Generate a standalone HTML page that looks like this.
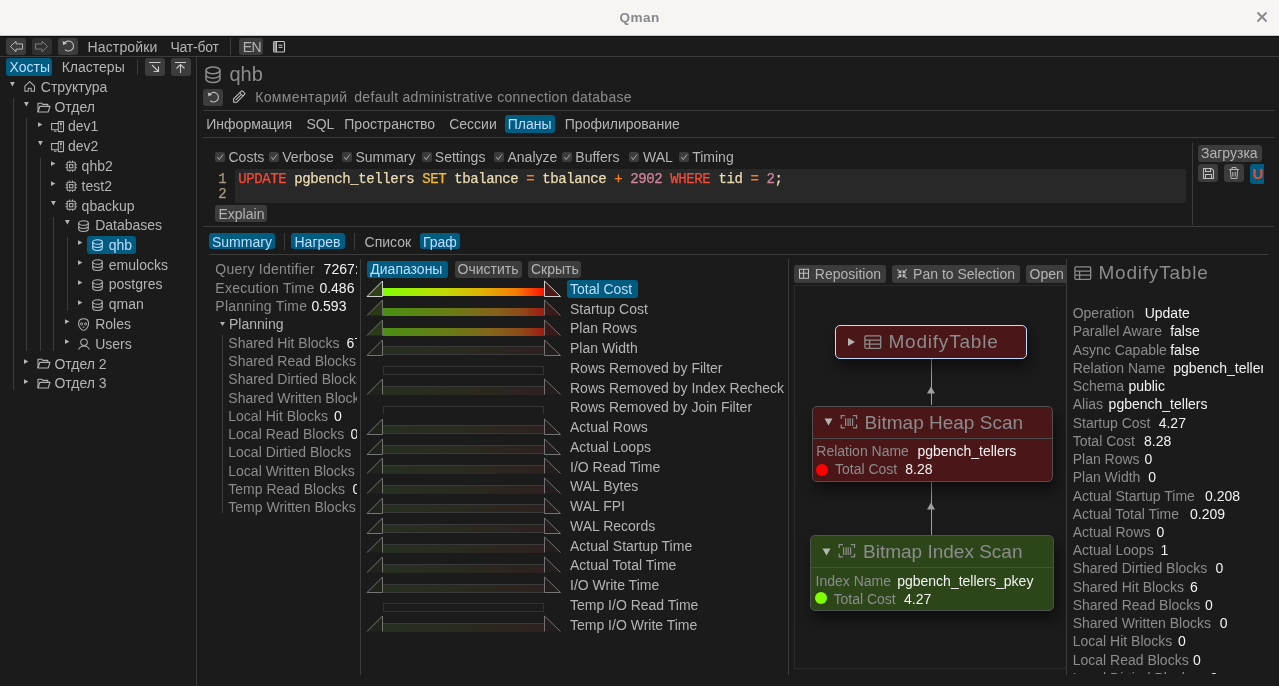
<!DOCTYPE html><html><head><meta charset="utf-8"><style>
html,body{margin:0;padding:0;}
body{width:1279px;height:686px;overflow:hidden;background:#1b1b1b;position:relative;font-family:"Liberation Sans",sans-serif;}
.t{position:absolute;white-space:nowrap;font-size:14px;line-height:16px;}
.r{position:absolute;}
.m{font-family:"Liberation Mono",monospace;-webkit-text-stroke:0.25px currentColor;}
svg{overflow:visible}
</style></head><body><div id="root" style="position:absolute;left:0;top:0;width:1279px;height:686px;overflow:hidden;will-change:transform;background:#1b1b1b">
<div class="r" style="left:0.0px;top:0.0px;width:1279.0px;height:35.0px;background:#f6f5f4;border-radius:0px;"></div>
<div class="r" style="left:0.0px;top:35.0px;width:1279.0px;height:1.0px;background:#c9c5c1;border-radius:0px;"></div>
<div class="r" style="left:0.0px;top:36.0px;width:1279.0px;height:1.0px;background:#0f0f0f;border-radius:0px;"></div>
<div class="t" style="left:619.5px;top:10.32px;color:#86898c;font-size:13.5px;line-height:16px;font-weight:bold;letter-spacing:0.5px;">Qman</div>
<svg class="r" style="left:1257px;top:12px;" width="10" height="10" viewBox="0 0 10 10"><path d="M1 1L9 9M9 1L1 9" stroke="#85898c" stroke-width="1.8" stroke-linecap="round"/></svg>
<div class="r" style="left:6.0px;top:38.0px;width:20.0px;height:17.0px;background:#3c3c3c;border-radius:3px;"></div>
<div class="r" style="left:32.0px;top:38.0px;width:20.0px;height:17.0px;background:#303030;border-radius:3px;"></div>
<div class="r" style="left:58.0px;top:38.0px;width:20.0px;height:17.0px;background:#3c3c3c;border-radius:3px;"></div>
<svg class="r" style="left:6px;top:38px;" width="20" height="17" viewBox="0 0 20 17"><path d="M4.5 8.5L10 3.2V5.9H16.5V11.1H10V13.8Z" fill="none" stroke="#b4b4b4" stroke-width="1" stroke-linejoin="miter"/></svg>
<svg class="r" style="left:32px;top:38px;" width="20" height="17" viewBox="0 0 20 17"><path d="M15.5 8.5L10 3.2V5.9H3.5V11.1H10V13.8Z" fill="none" stroke="#7a7a7a" stroke-width="1"/></svg>
<svg class="r" style="left:58px;top:38px;" width="20" height="17" viewBox="0 0 20 17"><path d="M6.4 5.2A5 5 0 1 1 7 11.6" fill="none" stroke="#c0c0c0" stroke-width="1.1"/><path d="M4.6 3.1L9.1 5L5.2 7.3Z" fill="#c0c0c0"/></svg>
<div class="t" style="left:87.5px;top:39.00px;color:#b4b4b4;font-size:14px;line-height:16px;letter-spacing:0.15px;">Настройки</div>
<div class="t" style="left:170.4px;top:39.00px;color:#b4b4b4;font-size:14px;line-height:16px;letter-spacing:-0.2px;">Чат-бот</div>
<div class="r" style="left:230.0px;top:38.0px;width:1.0px;height:17.0px;background:#3c3c3c;border-radius:0px;"></div>
<div class="r" style="left:239.0px;top:38.0px;width:23.5px;height:17.0px;background:#3c3c3c;border-radius:3px;"></div>
<div class="t" style="left:242.8px;top:39.00px;color:#b4b4b4;font-size:14px;line-height:16px;letter-spacing:-0.6px;">EN</div>
<svg class="r" style="left:272px;top:40px;" width="14" height="14" viewBox="0 0 14 14"><rect x="1.5" y="1.5" width="11" height="10.5" rx="1" fill="none" stroke="#c8c8c8" stroke-width="1.1"/><rect x="1.5" y="1.5" width="3" height="10.5" fill="#8a8a8a"/><path d="M4.5 1.5V12M6.5 5.2H10.5M6.5 7.4H10.5" stroke="#c8c8c8" stroke-width="1"/></svg>
<div class="r" style="left:0.0px;top:56.0px;width:1279.0px;height:1.0px;background:#3c3c3c;border-radius:0px;"></div>
<div class="r" style="left:6.0px;top:58.0px;width:46.0px;height:18.0px;background:#005c80;border-radius:3px;"></div>
<div class="t" style="left:9.6px;top:59.00px;color:#c0deff;font-size:14px;line-height:16px;">Хосты</div>
<div class="t" style="left:61.7px;top:59.00px;color:#b4b4b4;font-size:14px;line-height:16px;">Кластеры</div>
<div class="r" style="left:136.5px;top:59.0px;width:1.0px;height:16.0px;background:#3c3c3c;border-radius:0px;"></div>
<div class="r" style="left:145.0px;top:58.0px;width:20.0px;height:18.0px;background:#3c3c3c;border-radius:3px;"></div>
<div class="r" style="left:171.0px;top:58.0px;width:20.0px;height:18.0px;background:#3c3c3c;border-radius:3px;"></div>
<svg class="r" style="left:145px;top:58px;" width="20" height="18" viewBox="0 0 20 18"><path d="M4 4.5H15.5M7 7L13.5 13.5M13.5 8.5V13.5H8.5" fill="none" stroke="#c8c8c8" stroke-width="1.1"/></svg>
<svg class="r" style="left:171px;top:58px;" width="20" height="18" viewBox="0 0 20 18"><path d="M4 4.5H15M9.5 6.5V15M5.5 10.5L9.5 6.5L13.5 10.5" fill="none" stroke="#c8c8c8" stroke-width="1.1"/></svg>
<div class="r" style="left:196.0px;top:57.0px;width:1.0px;height:629.0px;background:#3c3c3c;border-radius:0px;"></div>
<div class="r" style="left:13.0px;top:98.0px;width:1.0px;height:292.0px;background:#3c3c3c;border-radius:0px;"></div>
<div class="r" style="left:26.0px;top:117.5px;width:1.0px;height:233.5px;background:#3c3c3c;border-radius:0px;"></div>
<div class="r" style="left:39.5px;top:157.5px;width:1.0px;height:193.5px;background:#3c3c3c;border-radius:0px;"></div>
<div class="r" style="left:53.0px;top:216.5px;width:1.0px;height:134.5px;background:#3c3c3c;border-radius:0px;"></div>
<div class="r" style="left:67.0px;top:236.5px;width:1.0px;height:74.5px;background:#3c3c3c;border-radius:0px;"></div>
<div class="r" style="left:87.0px;top:236.0px;width:49.0px;height:18.0px;background:#005c80;border-radius:3px;"></div>
<svg class="r" style="left:10.4px;top:82.0px;" width="6" height="6" viewBox="0 0 6 6"><path d="M0 0H4.8L2.4 4.4Z" fill="#b4b4b4"/></svg>
<svg class="r" style="left:24px;top:80.8px;" width="12" height="12" viewBox="0 0 12 12"><path d="M0.9 10.2V5.1L5.7 0.7L10.5 5.1V10.2H7.1V7.3H4.3V10.2Z" fill="none" stroke="#b4b4b4" stroke-width="1.05" stroke-linejoin="round"/></svg>
<div class="t" style="left:40.8px;top:79.00px;color:#b4b4b4;font-size:14px;line-height:16px;">Структура</div>
<svg class="r" style="left:23.95px;top:101.75px;" width="6" height="6" viewBox="0 0 6 6"><path d="M0 0H4.8L2.4 4.4Z" fill="#b4b4b4"/></svg>
<svg class="r" style="left:37.2px;top:101.65px;" width="14" height="11" viewBox="0 0 14 11"><path d="M1 10V1.2H4.6L5.8 2.4H10.8V4.2" fill="none" stroke="#b4b4b4" stroke-width="1.1" stroke-linejoin="round"/><path d="M1 10L2.8 4.4H13L11.2 10Z" fill="none" stroke="#b4b4b4" stroke-width="1.1" stroke-linejoin="round"/></svg>
<div class="t" style="left:54.4px;top:99.00px;color:#b4b4b4;font-size:14px;line-height:16px;">Отдел</div>
<svg class="r" style="left:37.5px;top:121.9px;" width="6" height="6" viewBox="0 0 6 6"><path d="M0 0.2L4.4 2.6L0 5Z" fill="#b4b4b4"/></svg>
<svg class="r" style="left:51.2px;top:121.0px;" width="14" height="12" viewBox="0 0 14 12"><path d="M7.3 2.5H0.6V8.7H7.3M3 10.2H5.5" fill="none" stroke="#b4b4b4" stroke-width="1.05"/><rect x="7.3" y="0.6" width="5.2" height="10" rx="0.6" fill="none" stroke="#b4b4b4" stroke-width="1.05"/><rect x="9" y="1.8" width="1.8" height="2.2" fill="#b4b4b4"/><path d="M9.9 4.5V8.5" stroke="#8a8a8a" stroke-width="0.9"/></svg>
<div class="t" style="left:68.0px;top:118.00px;color:#b4b4b4;font-size:14px;line-height:16px;">dev1</div>
<svg class="r" style="left:37.5px;top:141.25px;" width="6" height="6" viewBox="0 0 6 6"><path d="M0 0H4.8L2.4 4.4Z" fill="#b4b4b4"/></svg>
<svg class="r" style="left:51.2px;top:140.75px;" width="14" height="12" viewBox="0 0 14 12"><path d="M7.3 2.5H0.6V8.7H7.3M3 10.2H5.5" fill="none" stroke="#b4b4b4" stroke-width="1.05"/><rect x="7.3" y="0.6" width="5.2" height="10" rx="0.6" fill="none" stroke="#b4b4b4" stroke-width="1.05"/><rect x="9" y="1.8" width="1.8" height="2.2" fill="#b4b4b4"/><path d="M9.9 4.5V8.5" stroke="#8a8a8a" stroke-width="0.9"/></svg>
<div class="t" style="left:68.0px;top:138.00px;color:#b4b4b4;font-size:14px;line-height:16px;">dev2</div>
<svg class="r" style="left:51.050000000000004px;top:161.4px;" width="6" height="6" viewBox="0 0 6 6"><path d="M0 0.2L4.4 2.6L0 5Z" fill="#b4b4b4"/></svg>
<svg class="r" style="left:64.6px;top:159.8px;" width="12" height="12" viewBox="0 0 12 12"><rect x="2.2" y="2.2" width="8" height="8" rx="0.5" fill="none" stroke="#b4b4b4" stroke-width="1.05"/><rect x="4.5" y="4.6" width="3.4" height="3.2" fill="none" stroke="#b4b4b4" stroke-width="1.05"/><path d="M4.7 0.6V2.2M7.5 0.6V2.2M4.7 10.2V11.8M7.5 10.2V11.8M0.6 4.8H2.2M0.6 7.6H2.2M10.2 4.8H11.8M10.2 7.6H11.8" stroke="#b4b4b4" stroke-width="1"/></svg>
<div class="t" style="left:81.6px;top:158.00px;color:#b4b4b4;font-size:14px;line-height:16px;">qhb2</div>
<svg class="r" style="left:51.050000000000004px;top:181.15px;" width="6" height="6" viewBox="0 0 6 6"><path d="M0 0.2L4.4 2.6L0 5Z" fill="#b4b4b4"/></svg>
<svg class="r" style="left:64.6px;top:179.55px;" width="12" height="12" viewBox="0 0 12 12"><rect x="2.2" y="2.2" width="8" height="8" rx="0.5" fill="none" stroke="#b4b4b4" stroke-width="1.05"/><rect x="4.5" y="4.6" width="3.4" height="3.2" fill="none" stroke="#b4b4b4" stroke-width="1.05"/><path d="M4.7 0.6V2.2M7.5 0.6V2.2M4.7 10.2V11.8M7.5 10.2V11.8M0.6 4.8H2.2M0.6 7.6H2.2M10.2 4.8H11.8M10.2 7.6H11.8" stroke="#b4b4b4" stroke-width="1"/></svg>
<div class="t" style="left:81.6px;top:178.00px;color:#b4b4b4;font-size:14px;line-height:16px;">test2</div>
<svg class="r" style="left:51.050000000000004px;top:200.5px;" width="6" height="6" viewBox="0 0 6 6"><path d="M0 0H4.8L2.4 4.4Z" fill="#b4b4b4"/></svg>
<svg class="r" style="left:64.6px;top:199.3px;" width="12" height="12" viewBox="0 0 12 12"><rect x="2.2" y="2.2" width="8" height="8" rx="0.5" fill="none" stroke="#b4b4b4" stroke-width="1.05"/><rect x="4.5" y="4.6" width="3.4" height="3.2" fill="none" stroke="#b4b4b4" stroke-width="1.05"/><path d="M4.7 0.6V2.2M7.5 0.6V2.2M4.7 10.2V11.8M7.5 10.2V11.8M0.6 4.8H2.2M0.6 7.6H2.2M10.2 4.8H11.8M10.2 7.6H11.8" stroke="#b4b4b4" stroke-width="1"/></svg>
<div class="t" style="left:81.6px;top:198.00px;color:#b4b4b4;font-size:14px;line-height:16px;">qbackup</div>
<svg class="r" style="left:64.60000000000001px;top:220.25px;" width="6" height="6" viewBox="0 0 6 6"><path d="M0 0H4.8L2.4 4.4Z" fill="#b4b4b4"/></svg>
<svg class="r" style="left:78.4px;top:219.65px;" width="12" height="13" viewBox="0 0 12 13"><g transform="scale(1.0)"><ellipse cx="5.5" cy="3" rx="4.8" ry="2.3" fill="none" stroke="#b4b4b4" stroke-width="1.05"/><path d="M0.7 3V9C0.7 10.3 2.8 11.4 5.5 11.4C8.2 11.4 10.3 10.3 10.3 9V3M0.7 6C0.7 7.3 2.8 8.4 5.5 8.4C8.2 8.4 10.3 7.3 10.3 6" fill="none" stroke="#b4b4b4" stroke-width="1.05"/></g></svg>
<div class="t" style="left:95.2px;top:217.00px;color:#b4b4b4;font-size:14px;line-height:16px;">Databases</div>
<svg class="r" style="left:78.15px;top:240.4px;" width="6" height="6" viewBox="0 0 6 6"><path d="M0 0.2L4.4 2.6L0 5Z" fill="#b4b4b4"/></svg>
<svg class="r" style="left:92.0px;top:239.4px;" width="12" height="13" viewBox="0 0 12 13"><g transform="scale(1.0)"><ellipse cx="5.5" cy="3" rx="4.8" ry="2.3" fill="none" stroke="#c0deff" stroke-width="1.05"/><path d="M0.7 3V9C0.7 10.3 2.8 11.4 5.5 11.4C8.2 11.4 10.3 10.3 10.3 9V3M0.7 6C0.7 7.3 2.8 8.4 5.5 8.4C8.2 8.4 10.3 7.3 10.3 6" fill="none" stroke="#c0deff" stroke-width="1.05"/></g></svg>
<div class="t" style="left:108.8px;top:237.00px;color:#c0deff;font-size:14px;line-height:16px;">qhb</div>
<svg class="r" style="left:78.15px;top:260.15px;" width="6" height="6" viewBox="0 0 6 6"><path d="M0 0.2L4.4 2.6L0 5Z" fill="#b4b4b4"/></svg>
<svg class="r" style="left:92.0px;top:259.15px;" width="12" height="13" viewBox="0 0 12 13"><g transform="scale(1.0)"><ellipse cx="5.5" cy="3" rx="4.8" ry="2.3" fill="none" stroke="#b4b4b4" stroke-width="1.05"/><path d="M0.7 3V9C0.7 10.3 2.8 11.4 5.5 11.4C8.2 11.4 10.3 10.3 10.3 9V3M0.7 6C0.7 7.3 2.8 8.4 5.5 8.4C8.2 8.4 10.3 7.3 10.3 6" fill="none" stroke="#b4b4b4" stroke-width="1.05"/></g></svg>
<div class="t" style="left:108.8px;top:257.00px;color:#b4b4b4;font-size:14px;line-height:16px;">emulocks</div>
<svg class="r" style="left:78.15px;top:279.9px;" width="6" height="6" viewBox="0 0 6 6"><path d="M0 0.2L4.4 2.6L0 5Z" fill="#b4b4b4"/></svg>
<svg class="r" style="left:92.0px;top:278.9px;" width="12" height="13" viewBox="0 0 12 13"><g transform="scale(1.0)"><ellipse cx="5.5" cy="3" rx="4.8" ry="2.3" fill="none" stroke="#b4b4b4" stroke-width="1.05"/><path d="M0.7 3V9C0.7 10.3 2.8 11.4 5.5 11.4C8.2 11.4 10.3 10.3 10.3 9V3M0.7 6C0.7 7.3 2.8 8.4 5.5 8.4C8.2 8.4 10.3 7.3 10.3 6" fill="none" stroke="#b4b4b4" stroke-width="1.05"/></g></svg>
<div class="t" style="left:108.8px;top:276.00px;color:#b4b4b4;font-size:14px;line-height:16px;">postgres</div>
<svg class="r" style="left:78.15px;top:299.65px;" width="6" height="6" viewBox="0 0 6 6"><path d="M0 0.2L4.4 2.6L0 5Z" fill="#b4b4b4"/></svg>
<svg class="r" style="left:92.0px;top:298.65px;" width="12" height="13" viewBox="0 0 12 13"><g transform="scale(1.0)"><ellipse cx="5.5" cy="3" rx="4.8" ry="2.3" fill="none" stroke="#b4b4b4" stroke-width="1.05"/><path d="M0.7 3V9C0.7 10.3 2.8 11.4 5.5 11.4C8.2 11.4 10.3 10.3 10.3 9V3M0.7 6C0.7 7.3 2.8 8.4 5.5 8.4C8.2 8.4 10.3 7.3 10.3 6" fill="none" stroke="#b4b4b4" stroke-width="1.05"/></g></svg>
<div class="t" style="left:108.8px;top:296.00px;color:#b4b4b4;font-size:14px;line-height:16px;">qman</div>
<svg class="r" style="left:64.60000000000001px;top:319.4px;" width="6" height="6" viewBox="0 0 6 6"><path d="M0 0.2L4.4 2.6L0 5Z" fill="#b4b4b4"/></svg>
<svg class="r" style="left:78.4px;top:318.2px;" width="12" height="13" viewBox="0 0 12 13"><path d="M5.6 0.7C8.6 0.7 10.6 2.8 10.6 5.6C10.6 9 7.6 12.3 5.6 12.3C3.6 12.3 0.6 9 0.6 5.6C0.6 2.8 2.6 0.7 5.6 0.7Z" fill="none" stroke="#b4b4b4" stroke-width="1.05"/><circle cx="3.6" cy="5.9" r="1.1" fill="none" stroke="#b4b4b4" stroke-width="0.9"/><circle cx="7.6" cy="5.9" r="1.1" fill="none" stroke="#b4b4b4" stroke-width="0.9"/><path d="M4.6 9.1H6.6" stroke="#b4b4b4" stroke-width="0.9"/></svg>
<div class="t" style="left:95.2px;top:316.00px;color:#b4b4b4;font-size:14px;line-height:16px;">Roles</div>
<svg class="r" style="left:64.60000000000001px;top:339.15px;" width="6" height="6" viewBox="0 0 6 6"><path d="M0 0.2L4.4 2.6L0 5Z" fill="#b4b4b4"/></svg>
<svg class="r" style="left:78.4px;top:337.75px;" width="13" height="13" viewBox="0 0 13 13"><circle cx="6" cy="4.3" r="3.3" fill="none" stroke="#b4b4b4" stroke-width="1.05"/><path d="M0.6 11.6C1.6 9.3 3.6 8 6 8C8.4 8 10.4 9.3 11.4 11.6" fill="none" stroke="#b4b4b4" stroke-width="1.05"/></svg>
<div class="t" style="left:95.2px;top:336.00px;color:#b4b4b4;font-size:14px;line-height:16px;">Users</div>
<svg class="r" style="left:23.95px;top:358.9px;" width="6" height="6" viewBox="0 0 6 6"><path d="M0 0.2L4.4 2.6L0 5Z" fill="#b4b4b4"/></svg>
<svg class="r" style="left:37.2px;top:358.4px;" width="14" height="11" viewBox="0 0 14 11"><path d="M1 10V1.2H4.6L5.8 2.4H10.8V4.2" fill="none" stroke="#b4b4b4" stroke-width="1.1" stroke-linejoin="round"/><path d="M1 10L2.8 4.4H13L11.2 10Z" fill="none" stroke="#b4b4b4" stroke-width="1.1" stroke-linejoin="round"/></svg>
<div class="t" style="left:54.4px;top:356.00px;color:#b4b4b4;font-size:14px;line-height:16px;">Отдел 2</div>
<svg class="r" style="left:23.95px;top:378.65px;" width="6" height="6" viewBox="0 0 6 6"><path d="M0 0.2L4.4 2.6L0 5Z" fill="#b4b4b4"/></svg>
<svg class="r" style="left:37.2px;top:378.15px;" width="14" height="11" viewBox="0 0 14 11"><path d="M1 10V1.2H4.6L5.8 2.4H10.8V4.2" fill="none" stroke="#b4b4b4" stroke-width="1.1" stroke-linejoin="round"/><path d="M1 10L2.8 4.4H13L11.2 10Z" fill="none" stroke="#b4b4b4" stroke-width="1.1" stroke-linejoin="round"/></svg>
<div class="t" style="left:54.4px;top:375.00px;color:#b4b4b4;font-size:14px;line-height:16px;">Отдел 3</div>
<svg class="r" style="left:204.5px;top:65.5px;" width="17" height="18" viewBox="0 0 17 18"><g transform="scale(1.45)"><ellipse cx="5.5" cy="3" rx="4.8" ry="2.3" fill="none" stroke="#8c8c8c" stroke-width="1.05"/><path d="M0.7 3V9C0.7 10.3 2.8 11.4 5.5 11.4C8.2 11.4 10.3 10.3 10.3 9V3M0.7 6C0.7 7.3 2.8 8.4 5.5 8.4C8.2 8.4 10.3 7.3 10.3 6" fill="none" stroke="#8c8c8c" stroke-width="1.05"/></g></svg>
<div class="t" style="left:229.5px;top:62.87px;color:#8c8c8c;font-size:20px;line-height:23px;">qhb</div>
<div class="r" style="left:203.0px;top:89.0px;width:20.0px;height:17.0px;background:#3c3c3c;border-radius:3px;"></div>
<svg class="r" style="left:203px;top:89px;" width="20" height="17" viewBox="0 0 20 17"><path d="M6.6 5.6A4.8 4.8 0 1 1 7.2 11.6" fill="none" stroke="#c0c0c0" stroke-width="1.1"/><path d="M4.8 3.6L9.2 5.4L5.4 7.6Z" fill="#c0c0c0"/></svg>
<svg class="r" style="left:232px;top:90px;" width="14" height="14" viewBox="0 0 14 14"><g transform="translate(6.6 7.2) rotate(-45)"><path d="M-7 0L-4.8 -2.3H6.2A1 1 0 0 1 7.2 -1.3V1.3A1 1 0 0 1 6.2 2.3H-4.8Z" fill="none" stroke="#c0c0c0" stroke-width="1.05" stroke-linejoin="round"/><path d="M4 -2.3V2.3M-4.2 0H4" stroke="#c0c0c0" stroke-width="1"/></g></svg>
<div class="t" style="left:255.2px;top:89.00px;color:#8c8c8c;font-size:14px;line-height:16px;letter-spacing:0.37px;">Комментарий</div>
<div class="t" style="left:354.3px;top:89.00px;color:#8c8c8c;font-size:14px;line-height:16px;letter-spacing:0.29px;">default administrative connection database</div>
<div class="r" style="left:203.0px;top:110.0px;width:1071.0px;height:1.0px;background:#3c3c3c;border-radius:0px;"></div>
<div class="r" style="left:505.0px;top:115.0px;width:50.0px;height:18.0px;background:#005c80;border-radius:3px;"></div>
<div class="t" style="left:206.3px;top:116.00px;color:#b4b4b4;font-size:14px;line-height:16px;">Информация</div>
<div class="t" style="left:306.4px;top:116.00px;color:#b4b4b4;font-size:14px;line-height:16px;">SQL</div>
<div class="t" style="left:344.3px;top:116.00px;color:#b4b4b4;font-size:14px;line-height:16px;">Пространство</div>
<div class="t" style="left:449.2px;top:116.00px;color:#b4b4b4;font-size:14px;line-height:16px;">Сессии</div>
<div class="t" style="left:507.8px;top:116.00px;color:#c0deff;font-size:14px;line-height:16px;">Планы</div>
<div class="t" style="left:564.8px;top:116.00px;color:#b4b4b4;font-size:14px;line-height:16px;">Профилирование</div>
<div class="r" style="left:203.0px;top:137.0px;width:1071.0px;height:1.0px;background:#3c3c3c;border-radius:0px;"></div>
<div class="r" style="left:215.2px;top:152.3px;width:10.0px;height:10.0px;background:#3c3c3c;border-radius:2px;"></div>
<svg class="r" style="left:215.2px;top:152.3px;" width="10" height="10" viewBox="0 0 10 10"><path d="M2.3 5L4.2 7.6L8 2.4" fill="none" stroke="#b4b4b4" stroke-width="0.9"/></svg>
<div class="t" style="left:228.5px;top:149.00px;color:#b4b4b4;font-size:14px;line-height:16px;">Costs</div>
<div class="r" style="left:269.1px;top:152.3px;width:10.0px;height:10.0px;background:#3c3c3c;border-radius:2px;"></div>
<svg class="r" style="left:269.1px;top:152.3px;" width="10" height="10" viewBox="0 0 10 10"><path d="M2.3 5L4.2 7.6L8 2.4" fill="none" stroke="#b4b4b4" stroke-width="0.9"/></svg>
<div class="t" style="left:282.3px;top:149.00px;color:#b4b4b4;font-size:14px;line-height:16px;">Verbose</div>
<div class="r" style="left:342.3px;top:152.3px;width:10.0px;height:10.0px;background:#3c3c3c;border-radius:2px;"></div>
<svg class="r" style="left:342.3px;top:152.3px;" width="10" height="10" viewBox="0 0 10 10"><path d="M2.3 5L4.2 7.6L8 2.4" fill="none" stroke="#b4b4b4" stroke-width="0.9"/></svg>
<div class="t" style="left:355.5px;top:149.00px;color:#b4b4b4;font-size:14px;line-height:16px;">Summary</div>
<div class="r" style="left:421.5px;top:152.3px;width:10.0px;height:10.0px;background:#3c3c3c;border-radius:2px;"></div>
<svg class="r" style="left:421.5px;top:152.3px;" width="10" height="10" viewBox="0 0 10 10"><path d="M2.3 5L4.2 7.6L8 2.4" fill="none" stroke="#b4b4b4" stroke-width="0.9"/></svg>
<div class="t" style="left:434.8px;top:149.00px;color:#b4b4b4;font-size:14px;line-height:16px;">Settings</div>
<div class="r" style="left:493.8px;top:152.3px;width:10.0px;height:10.0px;background:#3c3c3c;border-radius:2px;"></div>
<svg class="r" style="left:493.8px;top:152.3px;" width="10" height="10" viewBox="0 0 10 10"><path d="M2.3 5L4.2 7.6L8 2.4" fill="none" stroke="#b4b4b4" stroke-width="0.9"/></svg>
<div class="t" style="left:507.5px;top:149.00px;color:#b4b4b4;font-size:14px;line-height:16px;">Analyze</div>
<div class="r" style="left:562.2px;top:152.3px;width:10.0px;height:10.0px;background:#3c3c3c;border-radius:2px;"></div>
<svg class="r" style="left:562.2px;top:152.3px;" width="10" height="10" viewBox="0 0 10 10"><path d="M2.3 5L4.2 7.6L8 2.4" fill="none" stroke="#b4b4b4" stroke-width="0.9"/></svg>
<div class="t" style="left:575.3px;top:149.00px;color:#b4b4b4;font-size:14px;line-height:16px;">Buffers</div>
<div class="r" style="left:629.3px;top:152.3px;width:10.0px;height:10.0px;background:#3c3c3c;border-radius:2px;"></div>
<svg class="r" style="left:629.3px;top:152.3px;" width="10" height="10" viewBox="0 0 10 10"><path d="M2.3 5L4.2 7.6L8 2.4" fill="none" stroke="#b4b4b4" stroke-width="0.9"/></svg>
<div class="t" style="left:643.0px;top:149.00px;color:#b4b4b4;font-size:14px;line-height:16px;">WAL</div>
<div class="r" style="left:678.5px;top:152.3px;width:10.0px;height:10.0px;background:#3c3c3c;border-radius:2px;"></div>
<svg class="r" style="left:678.5px;top:152.3px;" width="10" height="10" viewBox="0 0 10 10"><path d="M2.3 5L4.2 7.6L8 2.4" fill="none" stroke="#b4b4b4" stroke-width="0.9"/></svg>
<div class="t" style="left:692.2px;top:149.00px;color:#b4b4b4;font-size:14px;line-height:16px;">Timing</div>
<div class="r" style="left:235.0px;top:169.3px;width:950.6px;height:33.3px;background:#282828;border-radius:2px;"></div>
<div class="t m" style="left:218.3px;top:171.00px;color:#a89984;font-size:14px;line-height:16px;letter-spacing:-0.4px;">1</div>
<div class="t m" style="left:218.3px;top:186.00px;color:#a89984;font-size:14px;line-height:16px;letter-spacing:-0.4px;">2</div>
<div class="t m" style="left:238.2px;top:171.00px;color:#ebdbb2;font-size:14px;line-height:16px;letter-spacing:-0.4px;"><span style="color:#fb4934">UPDATE</span> pgbench_tellers <span style="color:#fabd2f">SET</span> tbalance <span style="color:#fe8019">=</span> tbalance <span style="color:#fe8019">+</span> <span style="color:#d3869b">2902</span> <span style="color:#fb4934">WHERE</span> tid <span style="color:#fe8019">=</span> <span style="color:#d3869b">2</span>;</div>
<div class="r" style="left:1192.0px;top:143.0px;width:1.0px;height:82.0px;background:#3c3c3c;border-radius:0px;"></div>
<div class="r" style="left:1198.0px;top:145.0px;width:64.0px;height:16.6px;background:#3c3c3c;border-radius:3px;"></div>
<div class="t" style="left:1201.0px;top:145.00px;color:#b4b4b4;font-size:14px;line-height:16px;">Загрузка</div>
<div class="r" style="left:1198.0px;top:164.0px;width:20.0px;height:18.0px;background:#3c3c3c;border-radius:3px;"></div>
<div class="r" style="left:1224.0px;top:164.0px;width:20.0px;height:18.0px;background:#3c3c3c;border-radius:3px;"></div>
<svg class="r" style="left:1198px;top:164px;" width="20" height="18" viewBox="0 0 20 18"><path d="M5.5 4.5H13.5L15.5 6.5V14.5H5.5Z M7.5 4.5V7.5H12.5V4.5 M7.5 14.5V10.5H13.5V14.5" fill="none" stroke="#c0c0c0" stroke-width="1.05"/></svg>
<svg class="r" style="left:1224px;top:164px;" width="20" height="18" viewBox="0 0 20 18"><path d="M5 5.5H15M8 5.5V3.5H12V5.5M6.3 5.5L7 14.5H13L13.7 5.5M8.8 8V12.5M11.2 8V12.5" fill="none" stroke="#b4b4b4" stroke-width="1"/></svg>
<div class="r" style="left:1250px;top:164px;width:14px;height:20px;overflow:hidden;"><div class="r" style="left:0;top:0;width:20px;height:20px;background:#005c80;border-radius:3px"></div></div>
<div class="t" style="left:1252.5px;top:165.30px;color:#f0482a;font-size:15px;line-height:17px;font-weight:bold;">U</div>
<div class="r" style="left:215.0px;top:205.0px;width:51.7px;height:17.4px;background:#3c3c3c;border-radius:3px;"></div>
<div class="t" style="left:218.5px;top:206.00px;color:#b4b4b4;font-size:14px;line-height:16px;">Explain</div>
<div class="r" style="left:203.0px;top:226.0px;width:1071.0px;height:1.0px;background:#3c3c3c;border-radius:0px;"></div>
<div class="r" style="left:209.0px;top:233.3px;width:66.0px;height:16.2px;background:#005c80;border-radius:3px;"></div>
<div class="t" style="left:212.0px;top:234.00px;color:#c0deff;font-size:14px;line-height:16px;">Summary</div>
<div class="r" style="left:283.5px;top:233.0px;width:1.0px;height:17.0px;background:#3c3c3c;border-radius:0px;"></div>
<div class="r" style="left:291.0px;top:233.3px;width:54.0px;height:16.2px;background:#005c80;border-radius:3px;"></div>
<div class="t" style="left:294.5px;top:234.00px;color:#c0deff;font-size:14px;line-height:16px;">Нагрев</div>
<div class="r" style="left:353.5px;top:233.0px;width:1.0px;height:17.0px;background:#3c3c3c;border-radius:0px;"></div>
<div class="t" style="left:364.6px;top:234.00px;color:#b4b4b4;font-size:14px;line-height:16px;">Список</div>
<div class="r" style="left:420.0px;top:233.3px;width:39.7px;height:16.2px;background:#005c80;border-radius:3px;"></div>
<div class="t" style="left:423.0px;top:234.00px;color:#c0deff;font-size:14px;line-height:16px;">Граф</div>
<div class="r" style="left:209.0px;top:254.0px;width:1059.0px;height:1.0px;background:#3c3c3c;border-radius:0px;"></div>
<div class="r" style="left:210px;top:258px;width:147px;height:420px;overflow:hidden;">
<div class="t" style="left:5.3px;top:3.00px;color:#8c8c8c;font-size:14px;line-height:16px;letter-spacing:0.25px;">Query Identifier</div>
<div class="t" style="left:113.6px;top:3.00px;color:#f2f2f2;font-size:14px;line-height:16px;">7267:</div>
<div class="t" style="left:5.3px;top:22.00px;color:#8c8c8c;font-size:14px;line-height:16px;letter-spacing:0.25px;">Execution Time</div>
<div class="t" style="left:109.4px;top:22.00px;color:#f2f2f2;font-size:14px;line-height:16px;">0.486</div>
<div class="t" style="left:5.3px;top:40.00px;color:#8c8c8c;font-size:14px;line-height:16px;letter-spacing:0.25px;">Planning Time</div>
<div class="t" style="left:101.4px;top:40.00px;color:#f2f2f2;font-size:14px;line-height:16px;">0.593</div>
<svg class="r" style="left:9.5px;top:63px" width="6" height="6" viewBox="0 0 6 6"><path d="M0 1H5L2.5 5Z" fill="#b4b4b4"/></svg>
<div class="t" style="left:19.0px;top:58.00px;color:#b4b4b4;font-size:14px;line-height:16px;">Planning</div>
<div class="r" style="left:11.5px;top:77px;width:1px;height:177.70000000000005px;background:#3c3c3c"></div>
<div class="t" style="left:18.3px;top:77.00px;color:#8c8c8c;font-size:14px;line-height:16px;">Shared Hit Blocks</div>
<div class="t" style="left:136.4px;top:77.00px;color:#f2f2f2;font-size:14px;line-height:16px;">67</div>
<div class="t" style="left:18.3px;top:95.00px;color:#8c8c8c;font-size:14px;line-height:16px;">Shared Read Blocks</div>
<div class="t" style="left:18.3px;top:113.00px;color:#8c8c8c;font-size:14px;line-height:16px;">Shared Dirtied Blocks</div>
<div class="t" style="left:18.3px;top:132.00px;color:#8c8c8c;font-size:14px;line-height:16px;">Shared Written Blocks</div>
<div class="t" style="left:18.3px;top:150.00px;color:#8c8c8c;font-size:14px;line-height:16px;">Local Hit Blocks</div>
<div class="t" style="left:124.0px;top:150.00px;color:#f2f2f2;font-size:14px;line-height:16px;">0</div>
<div class="t" style="left:18.3px;top:168.00px;color:#8c8c8c;font-size:14px;line-height:16px;">Local Read Blocks</div>
<div class="t" style="left:140.5px;top:168.00px;color:#f2f2f2;font-size:14px;line-height:16px;">0</div>
<div class="t" style="left:18.3px;top:186.00px;color:#8c8c8c;font-size:14px;line-height:16px;">Local Dirtied Blocks</div>
<div class="t" style="left:18.3px;top:205.00px;color:#8c8c8c;font-size:14px;line-height:16px;">Local Written Blocks</div>
<div class="t" style="left:18.3px;top:223.00px;color:#8c8c8c;font-size:14px;line-height:16px;">Temp Read Blocks</div>
<div class="t" style="left:142.5px;top:223.00px;color:#f2f2f2;font-size:14px;line-height:16px;">0</div>
<div class="t" style="left:18.3px;top:241.00px;color:#8c8c8c;font-size:14px;line-height:16px;">Temp Written Blocks</div>
</div>
<div class="r" style="left:360.0px;top:259.0px;width:1.0px;height:416.0px;background:#3c3c3c;border-radius:0px;"></div>
<div class="r" style="left:367.0px;top:261.0px;width:81.0px;height:16.7px;background:#005c80;border-radius:3px;"></div>
<div class="t" style="left:370.3px;top:261.00px;color:#c0deff;font-size:14px;line-height:16px;">Диапазоны</div>
<div class="r" style="left:454.5px;top:261.0px;width:67.0px;height:16.7px;background:#3c3c3c;border-radius:3px;"></div>
<div class="t" style="left:457.5px;top:261.00px;color:#b4b4b4;font-size:14px;line-height:16px;">Очистить</div>
<div class="r" style="left:528.0px;top:261.0px;width:52.5px;height:16.7px;background:#3c3c3c;border-radius:3px;"></div>
<div class="t" style="left:531.0px;top:261.00px;color:#b4b4b4;font-size:14px;line-height:16px;">Скрыть</div>
<div class="r" style="left:567.0px;top:280.0px;width:71.0px;height:17.6px;background:#005c80;border-radius:3px;"></div>
<div class="r" style="left:383px;top:288.2px;width:161px;height:8px;background:linear-gradient(90deg,#80ff00 0%,#c4d800 40%,#e0b000 62%,#f58000 82%,#ff1000 100%)"></div>
<svg class="r" style="left:366px;top:280px;" width="18" height="18" viewBox="0 0 18 18"><path d="M1 16.5L16.5 1V16.5Z" fill="#2d4214"/><path d="M1 16.5L16.5 1V16.5H1" fill="none" stroke="#d0d0d0" stroke-width="1"/></svg>
<svg class="r" style="left:543px;top:280px;" width="19" height="18" viewBox="0 0 19 18"><path d="M1.5 1L17.5 16.5H1.5Z" fill="#4a1818"/><path d="M17.5 16.5H1.5V1L17.5 16.5" fill="none" stroke="#d0d0d0" stroke-width="1"/></svg>
<div class="t" style="left:570.0px;top:281.00px;color:#c0deff;font-size:14px;line-height:16px;">Total Cost</div>
<div class="r" style="left:383px;top:307.9px;width:161px;height:8px;background:linear-gradient(90deg,#4a9014 0%,#687c16 40%,#84641a 68%,#8e4a1a 86%,#a01a12 100%)"></div>
<svg class="r" style="left:366px;top:299px;" width="18" height="18" viewBox="0 0 18 18"><path d="M1 16.5L16.5 1V16.5Z" fill="#2a3a16"/><path d="M1 16.5L16.5 1V16.5" fill="none" stroke="#707070" stroke-width="1"/></svg>
<svg class="r" style="left:543px;top:299px;" width="19" height="18" viewBox="0 0 19 18"><path d="M1.5 1L17.5 16.5H1.5Z" fill="#3a1a1a"/><path d="M1.5 16.5V1L17.5 16.5" fill="none" stroke="#707070" stroke-width="1"/></svg>
<div class="t" style="left:570.0px;top:301.00px;color:#b4b4b4;font-size:14px;line-height:16px;">Startup Cost</div>
<div class="r" style="left:383px;top:327.7px;width:161px;height:8px;background:linear-gradient(90deg,#4a9014 0%,#687c16 40%,#84641a 68%,#8e4a1a 86%,#a01a12 100%)"></div>
<svg class="r" style="left:366px;top:319px;" width="18" height="18" viewBox="0 0 18 18"><path d="M1 16.5L16.5 1V16.5Z" fill="#2a3a16"/><path d="M1 16.5L16.5 1V16.5" fill="none" stroke="#707070" stroke-width="1"/></svg>
<svg class="r" style="left:543px;top:319px;" width="19" height="18" viewBox="0 0 19 18"><path d="M1.5 1L17.5 16.5H1.5Z" fill="#3a1a1a"/><path d="M1.5 16.5V1L17.5 16.5" fill="none" stroke="#707070" stroke-width="1"/></svg>
<div class="t" style="left:570.0px;top:320.00px;color:#b4b4b4;font-size:14px;line-height:16px;">Plan Rows</div>
<div class="r" style="left:383px;top:346.4px;width:161px;height:9px;background:linear-gradient(90deg,#263020 0%,#2a2a1e 50%,#2e2020 100%);border-top:1px solid #3a3a3a;border-bottom:1px solid #3a3a3a;box-sizing:border-box"></div>
<svg class="r" style="left:366px;top:339px;" width="18" height="18" viewBox="0 0 18 18"><path d="M1 16.5L16.5 1V16.5Z" fill="#1f231b"/><path d="M1 16.5L16.5 1V16.5H1" fill="none" stroke="#747474" stroke-width="1"/></svg>
<svg class="r" style="left:543px;top:339px;" width="19" height="18" viewBox="0 0 19 18"><path d="M1.5 1L17.5 16.5H1.5Z" fill="#231d1d"/><path d="M17.5 16.5H1.5V1L17.5 16.5" fill="none" stroke="#747474" stroke-width="1"/></svg>
<div class="t" style="left:570.0px;top:340.00px;color:#b4b4b4;font-size:14px;line-height:16px;">Plan Width</div>
<div class="r" style="left:382.5px;top:366.2px;width:161px;height:8.5px;border:1px solid #333;border-bottom:1px solid #333;box-sizing:border-box"></div>
<div class="t" style="left:570.0px;top:360.00px;color:#b4b4b4;font-size:14px;line-height:16px;">Rows Removed by Filter</div>
<div class="r" style="left:383px;top:385.9px;width:161px;height:9px;background:linear-gradient(90deg,#263020 0%,#2a2a1e 50%,#2e2020 100%);border-top:1px solid #3a3a3a;border-bottom:none;box-sizing:border-box"></div>
<svg class="r" style="left:366px;top:378px;" width="18" height="18" viewBox="0 0 18 18"><path d="M1 16.5L16.5 1V16.5Z" fill="#1f231b"/><path d="M1 16.5L16.5 1V16.5" fill="none" stroke="#747474" stroke-width="1"/></svg>
<svg class="r" style="left:543px;top:378px;" width="19" height="18" viewBox="0 0 19 18"><path d="M1.5 1L17.5 16.5H1.5Z" fill="#231d1d"/><path d="M1.5 16.5V1L17.5 16.5" fill="none" stroke="#747474" stroke-width="1"/></svg>
<div class="t" style="left:570.0px;top:380.00px;color:#b4b4b4;font-size:14px;line-height:16px;">Rows Removed by Index Recheck</div>
<div class="r" style="left:382.5px;top:405.7px;width:161px;height:8.5px;border:1px solid #333;border-bottom:none;box-sizing:border-box"></div>
<div class="t" style="left:570.0px;top:399.00px;color:#b4b4b4;font-size:14px;line-height:16px;">Rows Removed by Join Filter</div>
<div class="r" style="left:383px;top:425.4px;width:161px;height:9px;background:linear-gradient(90deg,#263020 0%,#2a2a1e 50%,#2e2020 100%);border-top:1px solid #3a3a3a;border-bottom:1px solid #3a3a3a;box-sizing:border-box"></div>
<svg class="r" style="left:366px;top:418px;" width="18" height="18" viewBox="0 0 18 18"><path d="M1 16.5L16.5 1V16.5Z" fill="#1f231b"/><path d="M1 16.5L16.5 1V16.5H1" fill="none" stroke="#747474" stroke-width="1"/></svg>
<svg class="r" style="left:543px;top:418px;" width="19" height="18" viewBox="0 0 19 18"><path d="M1.5 1L17.5 16.5H1.5Z" fill="#231d1d"/><path d="M17.5 16.5H1.5V1L17.5 16.5" fill="none" stroke="#747474" stroke-width="1"/></svg>
<div class="t" style="left:570.0px;top:419.00px;color:#b4b4b4;font-size:14px;line-height:16px;">Actual Rows</div>
<div class="r" style="left:383px;top:445.2px;width:161px;height:9px;background:linear-gradient(90deg,#263020 0%,#2a2a1e 50%,#2e2020 100%);border-top:1px solid #3a3a3a;border-bottom:1px solid #3a3a3a;box-sizing:border-box"></div>
<svg class="r" style="left:366px;top:438px;" width="18" height="18" viewBox="0 0 18 18"><path d="M1 16.5L16.5 1V16.5Z" fill="#1f231b"/><path d="M1 16.5L16.5 1V16.5H1" fill="none" stroke="#747474" stroke-width="1"/></svg>
<svg class="r" style="left:543px;top:438px;" width="19" height="18" viewBox="0 0 19 18"><path d="M1.5 1L17.5 16.5H1.5Z" fill="#231d1d"/><path d="M17.5 16.5H1.5V1L17.5 16.5" fill="none" stroke="#747474" stroke-width="1"/></svg>
<div class="t" style="left:570.0px;top:439.00px;color:#b4b4b4;font-size:14px;line-height:16px;">Actual Loops</div>
<div class="r" style="left:383px;top:464.9px;width:161px;height:9px;background:linear-gradient(90deg,#263020 0%,#2a2a1e 50%,#2e2020 100%);border-top:1px solid #3a3a3a;border-bottom:none;box-sizing:border-box"></div>
<svg class="r" style="left:366px;top:457px;" width="18" height="18" viewBox="0 0 18 18"><path d="M1 16.5L16.5 1V16.5Z" fill="#1f231b"/><path d="M1 16.5L16.5 1V16.5" fill="none" stroke="#747474" stroke-width="1"/></svg>
<svg class="r" style="left:543px;top:457px;" width="19" height="18" viewBox="0 0 19 18"><path d="M1.5 1L17.5 16.5H1.5Z" fill="#231d1d"/><path d="M1.5 16.5V1L17.5 16.5" fill="none" stroke="#747474" stroke-width="1"/></svg>
<div class="t" style="left:570.0px;top:459.00px;color:#b4b4b4;font-size:14px;line-height:16px;">I/O Read Time</div>
<div class="r" style="left:383px;top:484.7px;width:161px;height:9px;background:linear-gradient(90deg,#263020 0%,#2a2a1e 50%,#2e2020 100%);border-top:1px solid #3a3a3a;border-bottom:none;box-sizing:border-box"></div>
<svg class="r" style="left:366px;top:477px;" width="18" height="18" viewBox="0 0 18 18"><path d="M1 16.5L16.5 1V16.5Z" fill="#1f231b"/><path d="M1 16.5L16.5 1V16.5" fill="none" stroke="#747474" stroke-width="1"/></svg>
<svg class="r" style="left:543px;top:477px;" width="19" height="18" viewBox="0 0 19 18"><path d="M1.5 1L17.5 16.5H1.5Z" fill="#231d1d"/><path d="M1.5 16.5V1L17.5 16.5" fill="none" stroke="#747474" stroke-width="1"/></svg>
<div class="t" style="left:570.0px;top:478.00px;color:#b4b4b4;font-size:14px;line-height:16px;">WAL Bytes</div>
<div class="r" style="left:383px;top:504.4px;width:161px;height:9px;background:linear-gradient(90deg,#263020 0%,#2a2a1e 50%,#2e2020 100%);border-top:1px solid #3a3a3a;border-bottom:1px solid #3a3a3a;box-sizing:border-box"></div>
<svg class="r" style="left:366px;top:497px;" width="18" height="18" viewBox="0 0 18 18"><path d="M1 16.5L16.5 1V16.5Z" fill="#1f231b"/><path d="M1 16.5L16.5 1V16.5H1" fill="none" stroke="#747474" stroke-width="1"/></svg>
<svg class="r" style="left:543px;top:497px;" width="19" height="18" viewBox="0 0 19 18"><path d="M1.5 1L17.5 16.5H1.5Z" fill="#231d1d"/><path d="M17.5 16.5H1.5V1L17.5 16.5" fill="none" stroke="#747474" stroke-width="1"/></svg>
<div class="t" style="left:570.0px;top:498.00px;color:#b4b4b4;font-size:14px;line-height:16px;">WAL FPI</div>
<div class="r" style="left:383px;top:524.2px;width:161px;height:9px;background:linear-gradient(90deg,#263020 0%,#2a2a1e 50%,#2e2020 100%);border-top:1px solid #3a3a3a;border-bottom:1px solid #3a3a3a;box-sizing:border-box"></div>
<svg class="r" style="left:366px;top:517px;" width="18" height="18" viewBox="0 0 18 18"><path d="M1 16.5L16.5 1V16.5Z" fill="#1f231b"/><path d="M1 16.5L16.5 1V16.5H1" fill="none" stroke="#747474" stroke-width="1"/></svg>
<svg class="r" style="left:543px;top:517px;" width="19" height="18" viewBox="0 0 19 18"><path d="M1.5 1L17.5 16.5H1.5Z" fill="#231d1d"/><path d="M17.5 16.5H1.5V1L17.5 16.5" fill="none" stroke="#747474" stroke-width="1"/></svg>
<div class="t" style="left:570.0px;top:518.00px;color:#b4b4b4;font-size:14px;line-height:16px;">WAL Records</div>
<div class="r" style="left:383px;top:544.0px;width:161px;height:9px;background:linear-gradient(90deg,#263020 0%,#2a2a1e 50%,#2e2020 100%);border-top:1px solid #3a3a3a;border-bottom:none;box-sizing:border-box"></div>
<svg class="r" style="left:366px;top:536px;" width="18" height="18" viewBox="0 0 18 18"><path d="M1 16.5L16.5 1V16.5Z" fill="#1f231b"/><path d="M1 16.5L16.5 1V16.5" fill="none" stroke="#747474" stroke-width="1"/></svg>
<svg class="r" style="left:543px;top:536px;" width="19" height="18" viewBox="0 0 19 18"><path d="M1.5 1L17.5 16.5H1.5Z" fill="#231d1d"/><path d="M1.5 16.5V1L17.5 16.5" fill="none" stroke="#747474" stroke-width="1"/></svg>
<div class="t" style="left:570.0px;top:538.00px;color:#b4b4b4;font-size:14px;line-height:16px;">Actual Startup Time</div>
<div class="r" style="left:383px;top:563.7px;width:161px;height:9px;background:linear-gradient(90deg,#263020 0%,#2a2a1e 50%,#2e2020 100%);border-top:1px solid #3a3a3a;border-bottom:none;box-sizing:border-box"></div>
<svg class="r" style="left:366px;top:556px;" width="18" height="18" viewBox="0 0 18 18"><path d="M1 16.5L16.5 1V16.5Z" fill="#1f231b"/><path d="M1 16.5L16.5 1V16.5" fill="none" stroke="#747474" stroke-width="1"/></svg>
<svg class="r" style="left:543px;top:556px;" width="19" height="18" viewBox="0 0 19 18"><path d="M1.5 1L17.5 16.5H1.5Z" fill="#231d1d"/><path d="M1.5 16.5V1L17.5 16.5" fill="none" stroke="#747474" stroke-width="1"/></svg>
<div class="t" style="left:570.0px;top:557.00px;color:#b4b4b4;font-size:14px;line-height:16px;">Actual Total Time</div>
<div class="r" style="left:383px;top:583.5px;width:161px;height:9px;background:linear-gradient(90deg,#263020 0%,#2a2a1e 50%,#2e2020 100%);border-top:1px solid #3a3a3a;border-bottom:1px solid #3a3a3a;box-sizing:border-box"></div>
<svg class="r" style="left:366px;top:576px;" width="18" height="18" viewBox="0 0 18 18"><path d="M1 16.5L16.5 1V16.5Z" fill="#1f231b"/><path d="M1 16.5L16.5 1V16.5H1" fill="none" stroke="#747474" stroke-width="1"/></svg>
<svg class="r" style="left:543px;top:576px;" width="19" height="18" viewBox="0 0 19 18"><path d="M1.5 1L17.5 16.5H1.5Z" fill="#231d1d"/><path d="M17.5 16.5H1.5V1L17.5 16.5" fill="none" stroke="#747474" stroke-width="1"/></svg>
<div class="t" style="left:570.0px;top:577.00px;color:#b4b4b4;font-size:14px;line-height:16px;">I/O Write Time</div>
<div class="r" style="left:382.5px;top:603.2px;width:161px;height:8.5px;border:1px solid #333;border-bottom:1px solid #333;box-sizing:border-box"></div>
<div class="t" style="left:570.0px;top:597.00px;color:#b4b4b4;font-size:14px;line-height:16px;">Temp I/O Read Time</div>
<div class="r" style="left:383px;top:623.0px;width:161px;height:9px;background:linear-gradient(90deg,#263020 0%,#2a2a1e 50%,#2e2020 100%);border-top:1px solid #3a3a3a;border-bottom:none;box-sizing:border-box"></div>
<svg class="r" style="left:366px;top:615px;" width="18" height="18" viewBox="0 0 18 18"><path d="M1 16.5L16.5 1V16.5Z" fill="#1f231b"/><path d="M1 16.5L16.5 1V16.5" fill="none" stroke="#747474" stroke-width="1"/></svg>
<svg class="r" style="left:543px;top:615px;" width="19" height="18" viewBox="0 0 19 18"><path d="M1.5 1L17.5 16.5H1.5Z" fill="#231d1d"/><path d="M1.5 16.5V1L17.5 16.5" fill="none" stroke="#747474" stroke-width="1"/></svg>
<div class="t" style="left:570.0px;top:617.00px;color:#b4b4b4;font-size:14px;line-height:16px;">Temp I/O Write Time</div>
<div class="r" style="left:787.5px;top:259.0px;width:1.0px;height:416.0px;background:#3c3c3c;border-radius:0px;"></div>
<div class="r" style="left:794.0px;top:265.3px;width:92.0px;height:17.5px;background:#3c3c3c;border-radius:3px;"></div>
<svg class="r" style="left:798px;top:268px;" width="12" height="12" viewBox="0 0 12 12"><path d="M1.5 1.3H10.5V10.3H1.5Z M5.6 1.3V10.3 M1.5 5.3H10.5" fill="none" stroke="#c0c0c0" stroke-width="1.05"/></svg>
<div class="t" style="left:814.8px;top:266.00px;color:#b4b4b4;font-size:14px;line-height:16px;">Reposition</div>
<div class="r" style="left:892.2px;top:265.3px;width:127.4px;height:17.5px;background:#3c3c3c;border-radius:3px;"></div>
<svg class="r" style="left:896px;top:268px;" width="12" height="12" viewBox="0 0 12 12"><path d="M1.3 1.3L4.8 4.8M2.3 4.8H4.8V2.3M10.7 1.3L7.2 4.8M9.7 4.8H7.2V2.3M1.3 10.3L4.8 6.8M2.3 6.8H4.8V9.3M10.7 10.3L7.2 6.8M9.7 6.8H7.2V9.3" fill="none" stroke="#c0c0c0" stroke-width="1.1"/></svg>
<div class="t" style="left:913.1px;top:266.00px;color:#b4b4b4;font-size:14px;line-height:16px;">Pan to Selection</div>
<div class="r" style="left:1026px;top:265.3px;width:40px;height:17.5px;overflow:hidden"><div class="r" style="left:0;top:0;width:60px;height:17.5px;background:#3c3c3c;border-radius:3px"></div><div class="t" style="left:3.5px;top:0.65px;color:#b4b4b4">Open</div></div>
<div class="r" style="left:794px;top:285px;width:290px;height:384px;border:1px solid #2a2a2a;box-sizing:border-box"></div>
<div class="r" style="left:930.5px;top:358.7px;width:1.0px;height:46.8px;background:#a0a0a0;border-radius:0px;"></div>
<svg class="r" style="left:926px;top:386px;" width="10" height="8" viewBox="0 0 10 8"><path d="M5 0.5L9 7.5H1Z" fill="#a0a0a0"/></svg>
<div class="r" style="left:930.5px;top:482.0px;width:1.0px;height:53.0px;background:#a0a0a0;border-radius:0px;"></div>
<svg class="r" style="left:926px;top:502px;" width="10" height="8" viewBox="0 0 10 8"><path d="M5 0.5L9 7.5H1Z" fill="#a0a0a0"/></svg>
<div class="r" style="left:835px;top:324.8px;width:192px;height:34.0px;background:#4a1617;border:1px solid #c0deff;border-radius:5px;box-sizing:border-box;box-shadow:3px 8px 14px rgba(0,0,0,0.5)"></div>
<svg class="r" style="left:847px;top:337px;" width="9" height="10" viewBox="0 0 9 10"><path d="M1 1L8 5L1 9Z" fill="#b4b4b4"/></svg>
<svg class="r" style="left:864.3px;top:334.5px;" width="18" height="15" viewBox="0 0 18 15"><g transform="scale(1.0)"><rect x="0.9" y="0.9" width="15.8" height="12.4" rx="1" fill="none" stroke="#8c8c8c" stroke-width="1.3"/><path d="M0.9 5.1H16.7M0.9 9.1H16.7M5.6 5.1V13.3" stroke="#8c8c8c" stroke-width="1.25"/></g></svg>
<div class="t" style="left:888.4px;top:331.42px;color:#8c8c8c;font-size:19px;line-height:22px;letter-spacing:0.8px;">ModifyTable</div>
<div class="r" style="left:811.5px;top:405.5px;width:241.20000000000005px;height:76.89999999999998px;background:#4a1617;border:1px solid #505050;border-radius:5px;box-sizing:border-box;box-shadow:3px 8px 14px rgba(0,0,0,0.5)"></div>
<div class="r" style="left:812.5px;top:438.0px;width:239.2px;height:1.0px;background:#4c4c4c;border-radius:0px;"></div>
<svg class="r" style="left:823.5px;top:418px;" width="9" height="8" viewBox="0 0 9 8"><path d="M0.5 0.5H8.5L4.5 7.5Z" fill="#b4b4b4"/></svg>
<svg class="r" style="left:839.5px;top:413.8px;" width="18" height="16" viewBox="0 0 18 16"><path d="M1.2 5V1.6H5M12.8 1.6H16.6V5M1.2 10.5V13.9H5M12.8 13.9H16.6V10.5" fill="none" stroke="#8c8c8c" stroke-width="1.25"/><path d="M5.6 4.2V12M8.1 4.2V12M10.2 4.2V12M12.6 4.2V12" stroke="#8c8c8c" stroke-width="1.2"/></svg>
<div class="t" style="left:864.6px;top:411.72px;color:#8c8c8c;font-size:19px;line-height:22px;">Bitmap Heap Scan</div>
<div class="t" style="left:816.3px;top:443.00px;color:#8c8c8c;font-size:14px;line-height:16px;">Relation Name</div>
<div class="t" style="left:917.5px;top:443.00px;color:#f2f2f2;font-size:14px;line-height:16px;">pgbench_tellers</div>
<div class="r" style="left:816px;top:464px;width:12px;height:12px;border-radius:50%;background:#ff0000"></div>
<div class="t" style="left:835.0px;top:461.00px;color:#8c8c8c;font-size:14px;line-height:16px;">Total Cost</div>
<div class="t" style="left:905.3px;top:461.00px;color:#f2f2f2;font-size:14px;line-height:16px;">8.28</div>
<div class="r" style="left:809.5px;top:534.7px;width:244.20000000000005px;height:76.59999999999991px;background:#2d4619;border:1px solid #505050;border-radius:5px;box-sizing:border-box;box-shadow:3px 8px 14px rgba(0,0,0,0.5)"></div>
<div class="r" style="left:810.5px;top:567.0px;width:242.2px;height:1.0px;background:#4c4c4c;border-radius:0px;"></div>
<svg class="r" style="left:821.5px;top:547.5px;" width="9" height="8" viewBox="0 0 9 8"><path d="M0.5 0.5H8.5L4.5 7.5Z" fill="#b4b4b4"/></svg>
<svg class="r" style="left:838px;top:543px;" width="18" height="16" viewBox="0 0 18 16"><path d="M1.2 5V1.6H5M12.8 1.6H16.6V5M1.2 10.5V13.9H5M12.8 13.9H16.6V10.5" fill="none" stroke="#8c8c8c" stroke-width="1.25"/><path d="M5.6 4.2V12M8.1 4.2V12M10.2 4.2V12M12.6 4.2V12" stroke="#8c8c8c" stroke-width="1.2"/></svg>
<div class="t" style="left:863.0px;top:541.42px;color:#8c8c8c;font-size:19px;line-height:22px;">Bitmap Index Scan</div>
<div class="t" style="left:815.5px;top:573.00px;color:#8c8c8c;font-size:14px;line-height:16px;">Index Name</div>
<div class="t" style="left:897.2px;top:573.00px;color:#f2f2f2;font-size:14px;line-height:16px;">pgbench_tellers_pkey</div>
<div class="r" style="left:815px;top:592px;width:12px;height:12px;border-radius:50%;background:#80ff00"></div>
<div class="t" style="left:833.5px;top:591.00px;color:#8c8c8c;font-size:14px;line-height:16px;">Total Cost</div>
<div class="t" style="left:904.0px;top:591.00px;color:#f2f2f2;font-size:14px;line-height:16px;">4.27</div>
<div class="r" style="left:1066.0px;top:259.0px;width:1.0px;height:416.0px;background:#3c3c3c;border-radius:0px;"></div>
<div class="r" style="left:1067.0px;top:259.0px;width:212.0px;height:427.0px;background:#1b1b1b;border-radius:0px;"></div>
<svg class="r" style="left:1073.5px;top:265.8px;" width="18" height="15" viewBox="0 0 18 15"><g transform="scale(1.0)"><rect x="0.9" y="0.9" width="15.8" height="12.4" rx="1" fill="none" stroke="#8c8c8c" stroke-width="1.3"/><path d="M0.9 5.1H16.7M0.9 9.1H16.7M5.6 5.1V13.3" stroke="#8c8c8c" stroke-width="1.25"/></g></svg>
<div class="t" style="left:1098.4px;top:262.32px;color:#8c8c8c;font-size:19px;line-height:22px;letter-spacing:0.8px;">ModifyTable</div>
<div class="r" style="left:1067px;top:300px;width:196px;height:374.4px;overflow:hidden">
<div class="t" style="left:5.7px;top:5.00px;color:#8c8c8c;font-size:14px;line-height:16px;">Operation</div>
<div class="t" style="left:77.7px;top:5.00px;color:#f2f2f2;font-size:14px;line-height:16px;">Update</div>
<div class="t" style="left:5.7px;top:23.00px;color:#8c8c8c;font-size:14px;line-height:16px;">Parallel Aware</div>
<div class="t" style="left:103.2px;top:23.00px;color:#f2f2f2;font-size:14px;line-height:16px;">false</div>
<div class="t" style="left:5.7px;top:42.00px;color:#8c8c8c;font-size:14px;line-height:16px;">Async Capable</div>
<div class="t" style="left:103.2px;top:42.00px;color:#f2f2f2;font-size:14px;line-height:16px;">false</div>
<div class="t" style="left:5.7px;top:60.00px;color:#8c8c8c;font-size:14px;line-height:16px;">Relation Name</div>
<div class="t" style="left:106.3px;top:60.00px;color:#f2f2f2;font-size:14px;line-height:16px;">pgbench_tellers</div>
<div class="t" style="left:5.7px;top:78.00px;color:#8c8c8c;font-size:14px;line-height:16px;">Schema</div>
<div class="t" style="left:61.4px;top:78.00px;color:#f2f2f2;font-size:14px;line-height:16px;">public</div>
<div class="t" style="left:5.7px;top:96.00px;color:#8c8c8c;font-size:14px;line-height:16px;">Alias</div>
<div class="t" style="left:41.6px;top:96.00px;color:#f2f2f2;font-size:14px;line-height:16px;">pgbench_tellers</div>
<div class="t" style="left:5.7px;top:115.00px;color:#8c8c8c;font-size:14px;line-height:16px;">Startup Cost</div>
<div class="t" style="left:91.7px;top:115.00px;color:#f2f2f2;font-size:14px;line-height:16px;">4.27</div>
<div class="t" style="left:5.7px;top:133.00px;color:#8c8c8c;font-size:14px;line-height:16px;">Total Cost</div>
<div class="t" style="left:77.0px;top:133.00px;color:#f2f2f2;font-size:14px;line-height:16px;">8.28</div>
<div class="t" style="left:5.7px;top:151.00px;color:#8c8c8c;font-size:14px;line-height:16px;">Plan Rows</div>
<div class="t" style="left:77.6px;top:151.00px;color:#f2f2f2;font-size:14px;line-height:16px;">0</div>
<div class="t" style="left:5.7px;top:169.00px;color:#8c8c8c;font-size:14px;line-height:16px;">Plan Width</div>
<div class="t" style="left:81.3px;top:169.00px;color:#f2f2f2;font-size:14px;line-height:16px;">0</div>
<div class="t" style="left:5.7px;top:188.00px;color:#8c8c8c;font-size:14px;line-height:16px;">Actual Startup Time</div>
<div class="t" style="left:138.0px;top:188.00px;color:#f2f2f2;font-size:14px;line-height:16px;">0.208</div>
<div class="t" style="left:5.7px;top:206.00px;color:#8c8c8c;font-size:14px;line-height:16px;">Actual Total Time</div>
<div class="t" style="left:123.0px;top:206.00px;color:#f2f2f2;font-size:14px;line-height:16px;">0.209</div>
<div class="t" style="left:5.7px;top:224.00px;color:#8c8c8c;font-size:14px;line-height:16px;">Actual Rows</div>
<div class="t" style="left:89.5px;top:224.00px;color:#f2f2f2;font-size:14px;line-height:16px;">0</div>
<div class="t" style="left:5.7px;top:242.00px;color:#8c8c8c;font-size:14px;line-height:16px;">Actual Loops</div>
<div class="t" style="left:93.5px;top:242.00px;color:#f2f2f2;font-size:14px;line-height:16px;">1</div>
<div class="t" style="left:5.7px;top:260.00px;color:#8c8c8c;font-size:14px;line-height:16px;">Shared Dirtied Blocks</div>
<div class="t" style="left:148.5px;top:260.00px;color:#f2f2f2;font-size:14px;line-height:16px;">0</div>
<div class="t" style="left:5.7px;top:279.00px;color:#8c8c8c;font-size:14px;line-height:16px;">Shared Hit Blocks</div>
<div class="t" style="left:123.0px;top:279.00px;color:#f2f2f2;font-size:14px;line-height:16px;">6</div>
<div class="t" style="left:5.7px;top:297.00px;color:#8c8c8c;font-size:14px;line-height:16px;">Shared Read Blocks</div>
<div class="t" style="left:138.0px;top:297.00px;color:#f2f2f2;font-size:14px;line-height:16px;">0</div>
<div class="t" style="left:5.7px;top:315.00px;color:#8c8c8c;font-size:14px;line-height:16px;">Shared Written Blocks</div>
<div class="t" style="left:152.7px;top:315.00px;color:#f2f2f2;font-size:14px;line-height:16px;">0</div>
<div class="t" style="left:5.7px;top:333.00px;color:#8c8c8c;font-size:14px;line-height:16px;">Local Hit Blocks</div>
<div class="t" style="left:111.0px;top:333.00px;color:#f2f2f2;font-size:14px;line-height:16px;">0</div>
<div class="t" style="left:5.7px;top:352.00px;color:#8c8c8c;font-size:14px;line-height:16px;">Local Read Blocks</div>
<div class="t" style="left:126.0px;top:352.00px;color:#f2f2f2;font-size:14px;line-height:16px;">0</div>
<div class="t" style="left:5.7px;top:370.00px;color:#8c8c8c;font-size:14px;line-height:16px;">Local Dirtied Blocks</div>
<div class="t" style="left:143.0px;top:370.00px;color:#f2f2f2;font-size:14px;line-height:16px;">0</div>
</div>
</div></body></html>
